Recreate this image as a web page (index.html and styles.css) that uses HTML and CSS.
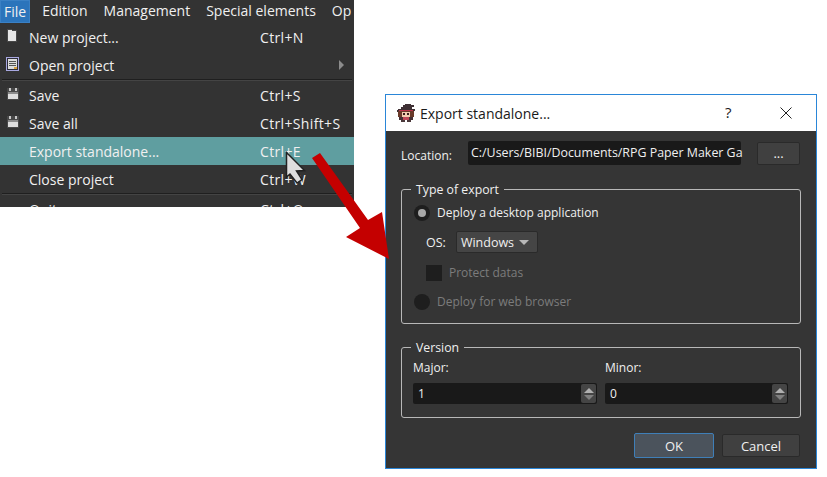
FILE: index.html
```html
<!DOCTYPE html>
<html lang="en">
<head>
    <meta charset="UTF-8">
    <meta name="viewport" content="width=device-width, initial-scale=1.0">
    <title>Export standalone</title>
    <link rel="stylesheet" href="styles.css">
</head>
<body>
    <div class="canvas">
        <!-- File menu -->
        <div class="app-menu">
            <div class="menu-bar">
                <span class="bar-item active">File</span>
                <span class="bar-item">Edition</span>
                <span class="bar-item">Management</span>
                <span class="bar-item">Special elements</span>
                <span class="bar-item">Op</span>
            </div>
            <div class="menu-list">
                <div class="menu-item">
                    <svg class="menu-icon" width="16" height="16" viewBox="0 0 16 16" shape-rendering="crispEdges"><path d="M2 1h4l1 1h5v12H2z" fill="#484848"/><path d="M3 2h3l1 1h4v10H3z" fill="#e6e6e6"/></svg>
                    <span>New project...</span><span class="shortcut">Ctrl+N</span>
                </div>
                <div class="menu-item">
                    <svg class="menu-icon" width="16" height="16" viewBox="0 0 16 16" shape-rendering="crispEdges"><path d="M1 1h13v14H1z" fill="#a8a8e0"/><path d="M2 2h11v12H2z" fill="#2e2e3a"/><path d="M3 3h9v10H3z" fill="#dcdcdc"/><path d="M4 5h7v1H4zM4 7h7v1H4zM4 9h7v1H4z" fill="#555555"/><path d="M9 11h3v2H9z" fill="#d8a040"/></svg>
                    <span>Open project</span><i class="submenu-arrow"></i>
                </div>
                <div class="menu-sep"></div>
                <div class="menu-item">
                    <svg class="menu-icon save-icon" width="16" height="16" viewBox="0 0 16 16" shape-rendering="crispEdges"><use href="#save-icon"/></svg>
                    <span>Save</span><span class="shortcut">Ctrl+S</span>
                </div>
                <div class="menu-item">
                    <svg class="menu-icon save-icon" width="16" height="16" viewBox="0 0 16 16" shape-rendering="crispEdges"><use href="#save-icon"/></svg>
                    <span>Save all</span><span class="shortcut">Ctrl+Shift+S</span>
                </div>
                <div class="menu-item selected">
                    <span class="menu-icon"></span>
                    <span>Export standalone...</span><span class="shortcut">Ctrl+E</span>
                </div>
                <div class="menu-item">
                    <span class="menu-icon"></span>
                    <span>Close project</span><span class="shortcut">Ctrl+W</span>
                </div>
                <div class="menu-sep"></div>
                <div class="menu-item">
                    <span class="menu-icon"></span>
                    <span>Quit</span><span class="shortcut">Ctrl+Q</span>
                </div>
            </div>
        </div>

        <!-- Export dialog -->
        <div class="dialog">
            <div class="title-bar">
                <svg class="app-icon" width="20" height="20" viewBox="0 0 20 20" shape-rendering="crispEdges">
                    <path d="M9 1h6v1h3v2h-2v2h3v2h-1v1H1V7h1V6h3V4h2V2h2z" fill="#3e3034"/>
                    <path d="M3 7h14v1H3z" fill="#b83048"/>
                    <path d="M2 8h16v6H2z" fill="#6a3a2a"/>
                    <path d="M6 9h8v5H6z" fill="#f2ccb0"/>
                    <path d="M7 10h2v2H7zM11 10h2v2h-2z" fill="#3a1c1c"/>
                    <path d="M3 14h14v3H3z" fill="#443034"/>
                    <path d="M7 14h6v3H7z" fill="#c04858"/>
                    <path d="M5 17h4v2H5zM11 17h4v2h-4z" fill="#4a383a"/>
                </svg>
                <span class="title-text">Export standalone...</span>
                <span class="title-help">?</span>
                <svg class="title-close" width="12" height="12" viewBox="0 0 12 12"><path d="M.5.5l11 11M11.5.5l-11 11" stroke="#222" fill="none"/></svg>
            </div>
            <div class="dialog-body">
                <div class="location-row">
                    <label class="location-label">Location:</label>
                    <div class="text-input location-input">C:/Users/BIBI/Documents/RPG Paper Maker Ga</div>
                    <div class="btn browse-btn">...</div>
                </div>

                <fieldset class="group type-group">
                    <legend>Type of export</legend>
                    <div class="radio-row">
                        <span class="radio checked"></span>
                        <span>Deploy a desktop application</span>
                    </div>
                    <div class="os-row">
                        <span>OS:</span>
                        <div class="combo">Windows<i class="combo-arrow"></i></div>
                    </div>
                    <div class="check-row disabled">
                        <span class="checkbox"></span>
                        <span>Protect datas</span>
                    </div>
                    <div class="radio-row disabled web-row">
                        <span class="radio"></span>
                        <span>Deploy for web browser</span>
                    </div>
                </fieldset>

                <fieldset class="group version-group">
                    <legend>Version</legend>
                    <div class="version-grid">
                        <div class="version-col">
                            <label>Major:</label>
                            <div class="spin">1<span class="spin-btns"><i class="up"></i><i class="down"></i></span></div>
                        </div>
                        <div class="version-col">
                            <label>Minor:</label>
                            <div class="spin">0<span class="spin-btns"><i class="up"></i><i class="down"></i></span></div>
                        </div>
                    </div>
                </fieldset>

                <div class="button-row">
                    <div class="btn ok-btn">OK</div>
                    <div class="btn cancel-btn">Cancel</div>
                </div>
            </div>
        </div>

        <!-- Arrow and mouse pointer lying over everything -->
        <svg class="overlay" width="827" height="477" viewBox="0 0 827 477">
            <defs>
                <g id="save-icon">
                    <path d="M2 2h12v12H2z" fill="#484848"/>
                    <path d="M4 2h2v3H4zM10 2h2v3h-2z" fill="#c8c8c8"/>
                    <path d="M3 6h10v2H3z" fill="#8c8c8c"/>
                    <path d="M3 8h10v5H3z" fill="#dedede"/>
                </g>
            </defs>
            <path d="M312 158L320 153L368 220L382 212L389 259L346 237L360 228Z" fill="#c40000"/>
            <path d="M286.500 152.500L304.500 170.500L296.500 171L302 179.500L297 183L290 174L286.500 177Z" fill="#dedede" stroke="#222" stroke-width="1.500"/>
        </svg>
    </div>
</body>
</html>
```

FILE: styles.css
```css
/* General Reset */
* {
    margin: 0;
    padding: 0;
    box-sizing: border-box;
}

body {
    font-family: "Open Sans", "Noto Sans", sans-serif;
    font-size: 14px;
    background-color: #ffffff;
    color: #f0f0f0;
}

.canvas {
    position: relative;
    width: 827px;
    height: 477px;
    overflow: hidden;
}

/* File menu */
.app-menu {
    position: absolute;
    left: 0;
    top: 0;
    width: 354px;
    height: 207px;
    overflow: hidden;
    background-color: #333333;
}

.menu-bar {
    display: flex;
    gap: 8px;
    height: 23px;
    white-space: nowrap;
}

.bar-item {
    padding: 0 4px;
    line-height: 21px;
}

.bar-item.active {
    width: 31px;
    background-color: #2b74bb;
    border: 1px solid #3a80c4;
    padding: 0 3px;
}

.menu-item {
    position: relative;
    display: flex;
    align-items: center;
    height: 28px;
    padding-left: 5px;
}

.menu-item.selected {
    background-color: #5f9ea0;
}

.menu-icon {
    width: 16px;
    height: 16px;
    margin-right: 8px;
    flex-shrink: 0;
    margin-top: -3px;
}

.menu-icon.save-icon {
    margin-top: -2px;
}

.shortcut {
    position: absolute;
    left: 260px;
    letter-spacing: 0.35px;
}

.submenu-arrow {
    position: absolute;
    left: 339px;
    top: 9px;
    border-left: 5px solid #8c8c8c;
    border-top: 5px solid transparent;
    border-bottom: 5px solid transparent;
}

.menu-sep {
    height: 1px;
    margin: 0 2px 1px;
    background-color: #1f1f1f;
    box-shadow: 0 1px 0 #444444;
}

/* Dialog */
.dialog {
    position: absolute;
    left: 385px;
    top: 94px;
    width: 432px;
    height: 375px;
    border: 1px solid #2a86d8;
    background-color: #353535;
    display: flex;
    flex-direction: column;
}

.title-bar {
    display: flex;
    align-items: center;
    height: 36px;
    flex-shrink: 0;
    background-color: #ffffff;
    color: #1a1a1a;
    padding-left: 10px;
}

.title-text {
    margin-left: 4px;
}

.title-help {
    position: absolute;
    left: 339px;
    top: 7px;
    font-size: 15px;
}

.title-close {
    position: absolute;
    left: 394px;
    top: 12px;
}

.dialog-body {
    padding: 10px 15px 0;
    flex-grow: 1;
}

.location-row {
    display: flex;
    align-items: center;
    height: 24px;
}

.location-label {
    width: 67px;
    font-size: 12px;
    padding-top: 4px;
}

.text-input {
    background-color: #191919;
    border-radius: 2px;
}

.location-input {
    width: 273px;
    height: 24px;
    line-height: 23px;
    padding-left: 3px;
    white-space: nowrap;
    font-size: 12.400px;
}

.btn {
    display: flex;
    align-items: center;
    justify-content: center;
    background-color: #404040;
    border: 1px solid #2a2a2a;
    border-radius: 2px;
    font-size: 13px;
}

.browse-btn {
    width: 43px;
    height: 23px;
    margin-left: 16px;
}

/* Group boxes */
.group {
    border: 1px solid #b8b8b8;
    border-radius: 3px;
    width: 400px;
}

.group legend {
    margin-left: -3px;
    padding: 2px 5px 0;
    font-size: 12.300px;
    line-height: 16px;
}

.type-group {
    margin-top: 15px;
    height: 144px;
    padding: 6px 12px 0;
}

.radio-row,
.check-row {
    display: flex;
    align-items: center;
    gap: 7px;
    font-size: 12px;
}

.radio {
    width: 16px;
    height: 16px;
    border-radius: 50%;
    background-color: #1e1e1e;
    position: relative;
}

.radio.checked::after {
    content: "";
    position: absolute;
    left: 4px;
    top: 4px;
    width: 8px;
    height: 8px;
    border-radius: 50%;
    background-color: #a8a8a8;
}

.os-row {
    display: flex;
    align-items: center;
    gap: 10px;
    margin: 10px 0 0 12px;
    font-size: 12.500px;
}

.combo {
    display: flex;
    align-items: center;
    justify-content: space-between;
    width: 82px;
    height: 22px;
    padding: 0 8px 0 4px;
    background-color: #454545;
    border: 1px solid #2a2a2a;
    border-radius: 2px;
}

.combo-arrow {
    border-top: 5px solid #b8b8b8;
    border-left: 5px solid transparent;
    border-right: 5px solid transparent;
}

.check-row {
    margin: 11px 0 0 12px;
}

.checkbox {
    width: 16px;
    height: 16px;
    background-color: #1e1e1e;
}

.disabled {
    color: #7c7c7c;
}

.web-row {
    margin-top: 12px;
}

.version-group {
    margin-top: 14px;
    height: 80px;
    padding: 3px 12px 0 11px;
}

.version-group legend {
    margin-left: -2px;
}

.version-grid {
    display: grid;
    grid-template-columns: 184px 183px;
    gap: 8px;
}

.version-col label {
    display: block;
    font-size: 12px;
    height: 24px;
}

.spin {
    position: relative;
    height: 21px;
    line-height: 21px;
    padding-left: 5px;
    background-color: #191919;
    border-radius: 2px;
    font-size: 12px;
}

.spin-btns {
    position: absolute;
    right: 1px;
    top: 1px;
    width: 15px;
    height: 19px;
    display: flex;
    flex-direction: column;
    justify-content: center;
    align-items: center;
    gap: 2px;
    background-color: #454545;
    border-radius: 2px;
}

.spin-btns .up {
    border-bottom: 5px solid #b0b0b0;
    border-left: 5px solid transparent;
    border-right: 5px solid transparent;
}

.spin-btns .down {
    border-top: 5px solid #808080;
    border-left: 5px solid transparent;
    border-right: 5px solid transparent;
}

.button-row {
    display: flex;
    align-items: center;
    justify-content: flex-end;
    gap: 8px;
    margin-top: 15px;
    padding-right: 1px;
}

.ok-btn {
    width: 80px;
    height: 25px;
    background-color: #4b535c;
    border-color: #3f7fb8;
}

.cancel-btn {
    width: 78px;
    height: 23px;
}

.overlay {
    position: absolute;
    left: 0;
    top: 0;
}
```
